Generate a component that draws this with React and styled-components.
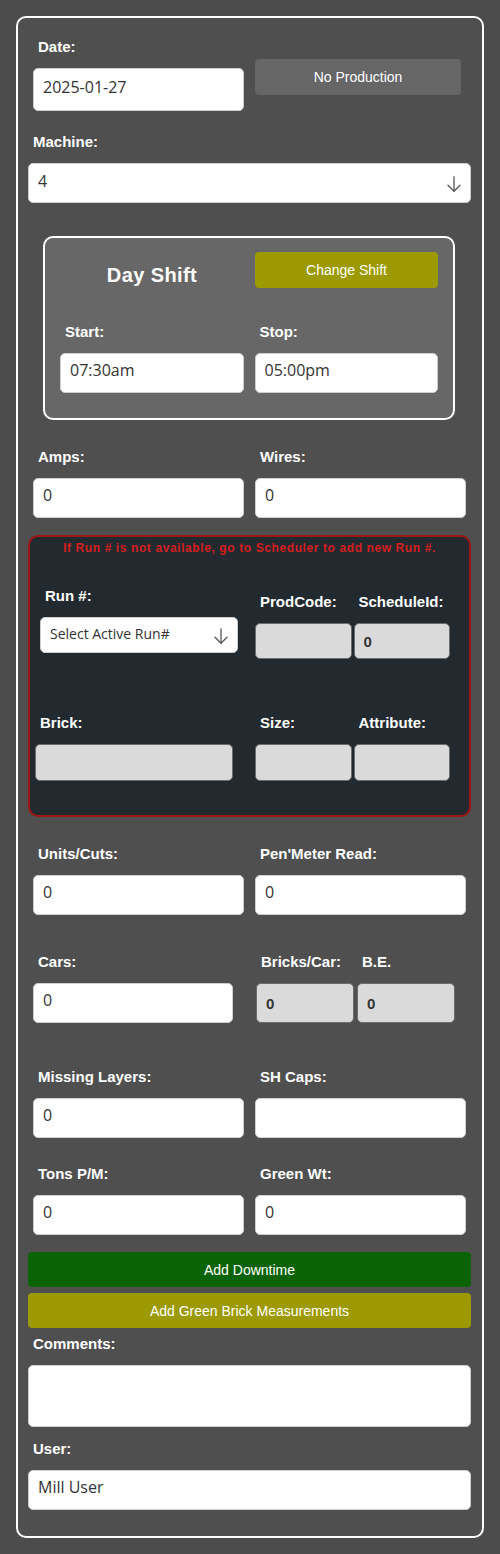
import React from 'react'
import styled, { createGlobalStyle } from 'styled-components'

const GlobalStyle = createGlobalStyle`
  html, body {
    margin: 0;
    background: #4c4c4c;
    font-family: "Liberation Sans", Arial, sans-serif;
  }
  * { box-sizing: border-box; }
`

const Card = styled.div`
  margin: 16px;
  border: 2px solid #ffffff;
  border-radius: 10px;
  background: #4f4f4f;
  padding: 19px 11px 26px 10px;
`

const Row = styled.div`
  display: flex;
  gap: 11px;
  padding: 0 5px;
  margin-top: ${(p) => p.$mt || 0}px;
  align-items: flex-start;
`

const Field = styled.div`
  display: flex;
  flex-direction: column;
  flex: 1 1 0;
  min-width: 0;
  width: ${(p) => (p.$w ? `${p.$w}px` : 'auto')};
  margin-top: ${(p) => p.$mt || 0}px;
  margin-left: ${(p) => p.$ml || 0}px;
`

const Label = styled.label`
  display: block;
  margin: 0 0 11px 5px;
  color: #ffffff;
  font-weight: bold;
  font-size: 15px;
  line-height: 20px;
  white-space: nowrap;
`

const TextInput = styled.input`
  display: block;
  width: ${(p) => (p.$w ? `${p.$w}px` : '100%')};
  height: ${(p) => p.$h || 40}px;
  padding: ${(p) => (p.$gray ? '0 9px' : '0 9px 6px')};
  border: 1px solid ${(p) => (p.$gray ? '#6c6c6c' : '#cfcfcf')};
  border-radius: 5px;
  background: ${(p) => (p.$gray ? '#dadada' : '#ffffff')};
  color: #333333;
  font-family: ${(p) => (p.$gray ? '"Liberation Sans", Arial, sans-serif' : '"Open Sans", sans-serif')};
  font-weight: ${(p) => (p.$gray ? 'bold' : 'normal')};
  font-size: ${(p) => (p.$gray ? 15 : 16)}px;
  outline: none;
`

const TextArea = styled.textarea`
  display: block;
  width: 100%;
  height: 62px;
  border: 1px solid #cfcfcf;
  border-radius: 5px;
  background: #ffffff;
  resize: none;
  outline: none;
`

const SelectBox = styled.div`
  display: flex;
  align-items: center;
  justify-content: space-between;
  height: ${(p) => p.$h || 40}px;
  padding: 0 9px 4px;
  border: 1px solid #cfcfcf;
  border-radius: 5px;
  background: #ffffff;
  color: #333333;
  font-family: "Open Sans", sans-serif;
  font-size: ${(p) => p.$fs || 16}px;
  svg { flex: none; margin-top: 6px; }
`

const ActionButton = styled.button`
  display: block;
  width: ${(p) => (p.$w ? `${p.$w}px` : '100%')};
  height: ${(p) => p.$h || 36}px;
  margin-top: ${(p) => p.$mt || 0}px;
  padding: 0;
  border: none;
  border-radius: 4px;
  background: ${(p) => p.$bg};
  color: #ffffff;
  font-family: "Liberation Sans", Arial, sans-serif;
  font-size: 14px;
  cursor: pointer;
`

const SideButton = styled(ActionButton)`
  flex: 1 1 0;
  min-width: 0;
  width: auto;
`

const ShiftBox = styled.div`
  margin: 33px 16px 0 15px;
  border: 2px solid #ffffff;
  border-radius: 10px;
  background: #676767;
  padding: 14px 15px 25px;
`

const ShiftHeader = styled.div`
  display: flex;
  gap: 11px;
  height: 36px;
`

const ShiftTitle = styled.div`
  flex: 0 0 184px;
  height: 36px;
  text-align: center;
  color: #ffffff;
  font-weight: bold;
  font-size: 20px;
  line-height: 46px;
  letter-spacing: 0.4px;
`

const ShiftRow = styled(Row)`
  padding: 0;
`

const RunBox = styled.div`
  margin-top: 17px;
  border: 2px solid #9e1616;
  border-radius: 10px;
  background: #222a30;
  padding: 4px 19px 34px 0;
`

const Warning = styled.div`
  padding-left: 19px;
  text-align: center;
  color: #d41f1f;
  font-weight: bold;
  font-size: 12px;
  line-height: 14px;
  letter-spacing: 0.6px;
  white-space: nowrap;
`

const RunRow = styled.div`
  display: grid;
  grid-template-columns: 215px 1fr;
  column-gap: 10px;
  align-items: start;
  justify-items: start;
  margin-top: ${(p) => p.$mt}px;
`

const PairGrid = styled.div`
  display: grid;
  grid-template-columns: 1fr 1fr;
  column-gap: ${(p) => p.$gap || 2}px;
  justify-self: stretch;
  margin-top: ${(p) => p.$mt || 0}px;
  margin-left: ${(p) => p.$ml || 0}px;
  width: ${(p) => (p.$w ? `${p.$w}px` : 'auto')};
`

const FullBlock = styled.div`
  margin-top: ${(p) => p.$mt || 0}px;
`

const DownArrow = () => (
  <svg width="14" height="16" viewBox="0 0 14 16" fill="none" stroke="#555" strokeWidth="1.3" strokeLinecap="round" strokeLinejoin="round">
    <path d="M7 0.8V15.2" />
    <path d="M1 9.2L7 15.2L13 9.2" />
  </svg>
)

const TwoFields = ({ mt, left, right }) => (
  <Row $mt={mt}>
    {[left, right].map((f) => (
      <Field key={f.label}>
        <Label>{f.label}</Label>
        <TextInput defaultValue={f.value} />
      </Field>
    ))}
  </Row>
)

export default function App() {
  return (
    <>
      <GlobalStyle />
      <Card>
        <Row>
          <Field>
            <Label>Date:</Label>
            <TextInput $h={43} defaultValue="2025-01-27" />
          </Field>
          <Field $mt={22}>
            <ActionButton $bg="#666666" $w={206}>No Production</ActionButton>
          </Field>
        </Row>

        <FullBlock $mt={21}>
          <Label>Machine:</Label>
          <SelectBox role="combobox">
            <span>4</span>
            <DownArrow />
          </SelectBox>
        </FullBlock>

        <ShiftBox>
          <ShiftHeader>
            <ShiftTitle>Day Shift</ShiftTitle>
            <SideButton $bg="#9c9a00">Change Shift</SideButton>
          </ShiftHeader>
          <ShiftRow $mt={34}>
            <Field>
              <Label>Start:</Label>
              <TextInput defaultValue="07:30am" />
            </Field>
            <Field>
              <Label>Stop:</Label>
              <TextInput defaultValue="05:00pm" />
            </Field>
          </ShiftRow>
        </ShiftBox>

        <TwoFields mt={27} left={{ label: 'Amps:', value: '0' }} right={{ label: 'Wires:', value: '0' }} />

        <RunBox>
          <Warning>If Run # is not available, go to Scheduler to add new Run #.</Warning>
          <RunRow $mt={31}>
            <Field $ml={10} $w={198}>
              <Label>Run #:</Label>
              <SelectBox role="combobox" $h={36} $fs={14}>
                <span>Select Active Run#</span>
                <DownArrow />
              </SelectBox>
            </Field>
            <PairGrid $mt={6}>
              <Field>
                <Label>ProdCode:</Label>
                <TextInput $gray $h={36} readOnly defaultValue="" />
              </Field>
              <Field>
                <Label>ScheduleId:</Label>
                <TextInput $gray $h={36} readOnly defaultValue="0" />
              </Field>
            </PairGrid>
          </RunRow>
          <RunRow $mt={54}>
            <Field $ml={5} $w={198}>
              <Label>Brick:</Label>
              <TextInput $gray $h={37} readOnly defaultValue="" />
            </Field>
            <PairGrid>
              <Field>
                <Label>Size:</Label>
                <TextInput $gray $h={37} readOnly defaultValue="" />
              </Field>
              <Field>
                <Label>Attribute:</Label>
                <TextInput $gray $h={37} readOnly defaultValue="" />
              </Field>
            </PairGrid>
          </RunRow>
        </RunBox>

        <TwoFields mt={27} left={{ label: 'Units/Cuts:', value: '0' }} right={{ label: "Pen'Meter Read:", value: '0' }} />

        <Row $mt={37}>
          <Field>
            <Label>Cars:</Label>
            <TextInput $w={200} defaultValue="0" />
          </Field>
          <Field>
            <PairGrid $gap={3} $ml={1} $w={199}>
              <Field>
                <Label>Bricks/Car:</Label>
                <TextInput $gray readOnly defaultValue="0" />
              </Field>
              <Field>
                <Label>B.E.</Label>
                <TextInput $gray readOnly defaultValue="0" />
              </Field>
            </PairGrid>
          </Field>
        </Row>

        <TwoFields mt={44} left={{ label: 'Missing Layers:', value: '0' }} right={{ label: 'SH Caps:', value: '' }} />
        <TwoFields mt={26} left={{ label: 'Tons P/M:', value: '0' }} right={{ label: 'Green Wt:', value: '0' }} />

        <ActionButton $mt={17} $h={35} $bg="#0a6406">Add Downtime</ActionButton>
        <ActionButton $mt={6} $h={35} $bg="#9c9a00">Add Green Brick Measurements</ActionButton>

        <FullBlock $mt={6}>
          <Label>Comments:</Label>
          <TextArea />
        </FullBlock>

        <FullBlock $mt={12}>
          <Label>User:</Label>
          <TextInput defaultValue="Mill User" />
        </FullBlock>
      </Card>
    </>
  )
}
